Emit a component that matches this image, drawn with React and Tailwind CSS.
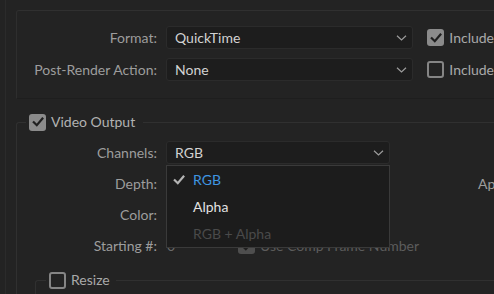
import React from "react";

function Chevron() {
  return (
    <svg width="11" height="6" viewBox="0 0 11 6" fill="none">
      <path d="M1 0.8 L5.5 5 L10 0.8" stroke="#9c9c9c" strokeWidth="1.2" />
    </svg>
  );
}

function Check({ color = "#1f1f1f", w = 12 }) {
  return (
    <svg width={w} height={w} viewBox="0 0 12 12" fill="none">
      <path d="M1.8 6.2 L4.8 9.2 L10.4 2.6" stroke={color} strokeWidth="2.2" strokeLinecap="square" />
    </svg>
  );
}

function Box({ checked, dim }) {
  if (checked) {
    return (
      <div className={`w-[17px] h-[17px] rounded-[3px] flex items-center justify-center shrink-0 ${dim ? "bg-[#4e4e4e]" : "bg-[#8b8b8b]"}`}>
        <Check />
      </div>
    );
  }
  return <div className="w-[17px] h-[17px] rounded-[3px] border-2 border-[#858585] shrink-0" />;
}

function Select({ value, w }) {
  return (
    <div className={`${w} h-[23px] rounded-[3px] bg-[#1d1d1d] border border-[#2b2b2b] flex items-center justify-between pl-[8px] pr-[5px] text-[#d2d2d2]`}>
      <span>{value}</span>
      <Chevron />
    </div>
  );
}

function Label({ children }) {
  return <div className="w-[140px] shrink-0 text-right text-[#9d9d9d] mr-[9px]">{children}</div>;
}

export default function App() {
  return (
    <div className="w-[494px] h-[294px] bg-[#232323] overflow-hidden flex font-['Lato',sans-serif] text-[14px] leading-none">
      <div className="w-[5px] shrink-0" />
      <div className="flex-1 min-w-0 border-l border-[#2b2b2b] pl-[10px] pt-[10px]">
        {/* Output group */}
        <div className="border-t border-l border-b border-t-[#303030] border-l-[#2e2e2e] border-b-[#1e1e1e] rounded-tl-[3px] pt-[15px] pb-[17px] flex flex-col gap-[9px] whitespace-nowrap">
          <div className="flex items-center">
            <Label>Format:</Label>
            <Select value="QuickTime" w="w-[248px]" />
            <div className="ml-[14px] flex items-center gap-[5px] text-[#a9a9a9]">
              <Box checked />
              <span>Include</span>
            </div>
          </div>
          <div className="flex items-center">
            <Label>Post-Render Action:</Label>
            <Select value="None" w="w-[248px]" />
            <div className="ml-[14px] flex items-center gap-[5px] text-[#a9a9a9]">
              <Box />
              <span>Include</span>
            </div>
          </div>
        </div>

        {/* Video Output */}
        <fieldset className="mt-[13px] border-t border-l border-r-0 border-b-0 border-[#303030] rounded-tl-[3px] whitespace-nowrap">
          <legend className="ml-[9px] pl-[3px] pr-[8px]">
            <div className="flex items-center gap-[5px] h-[20px] text-[#b2b2b2]">
              <Box checked />
              <span>Video Output</span>
            </div>
          </legend>
          <div className="mt-[9px] flex flex-col gap-[8px]">
            <div className="flex items-center">
              <Label>Channels:</Label>
              <div className="relative">
                <Select value="RGB" w="w-[224px]" />
                <div className="absolute left-0 top-full mt-[1px] z-10 w-[224px] bg-[#1c1c1c] border border-[#3a3a3a] flex flex-col">
                  <div className="h-[27px] flex items-center">
                    <div className="w-[26px] pl-[6px] flex items-center"><Check color="#b4b4b4" w={12} /></div>
                    <span className="text-[#3f95e2]">RGB</span>
                  </div>
                  <div className="h-[27px] flex items-center pl-[26px] text-[#e2e2e2]">Alpha</div>
                  <div className="h-[27px] flex items-center pl-[26px] text-[#4a4a4a]">RGB + Alpha</div>
                </div>
              </div>
            </div>
            <div className="flex items-center h-[23px]">
              <Label>Depth:</Label>
              <Select value="" w="w-[200px]" />
              <span className="ml-[112px] text-[#9d9d9d]">Ap</span>
            </div>
            <div className="flex items-center h-[23px]">
              <Label>Color:</Label>
              <Select value="" w="w-[200px]" />
            </div>
            <div className="flex items-center h-[23px]">
              <Label>Starting #:</Label>
              <span className="ml-[1px] text-[#6a6a6a] w-[71px]">0</span>
              <div className="flex items-center gap-[5px] text-[#5c5c5c]">
                <Box checked dim />
                <span>Use Comp Frame Number</span>
              </div>
            </div>
          </div>

          {/* Resize */}
          <fieldset className="mt-[14px] ml-[18px] h-[40px] border-t border-l border-r-0 border-b-0 border-[#303030] rounded-tl-[3px]">
            <legend className="ml-[10px] pl-[3px] pr-[6px]">
              <div className="flex items-center gap-[5px] h-[18px] text-[#a9a9a9]">
                <Box />
                <span>Resize</span>
              </div>
            </legend>
          </fieldset>
        </fieldset>
      </div>
    </div>
  );
}
